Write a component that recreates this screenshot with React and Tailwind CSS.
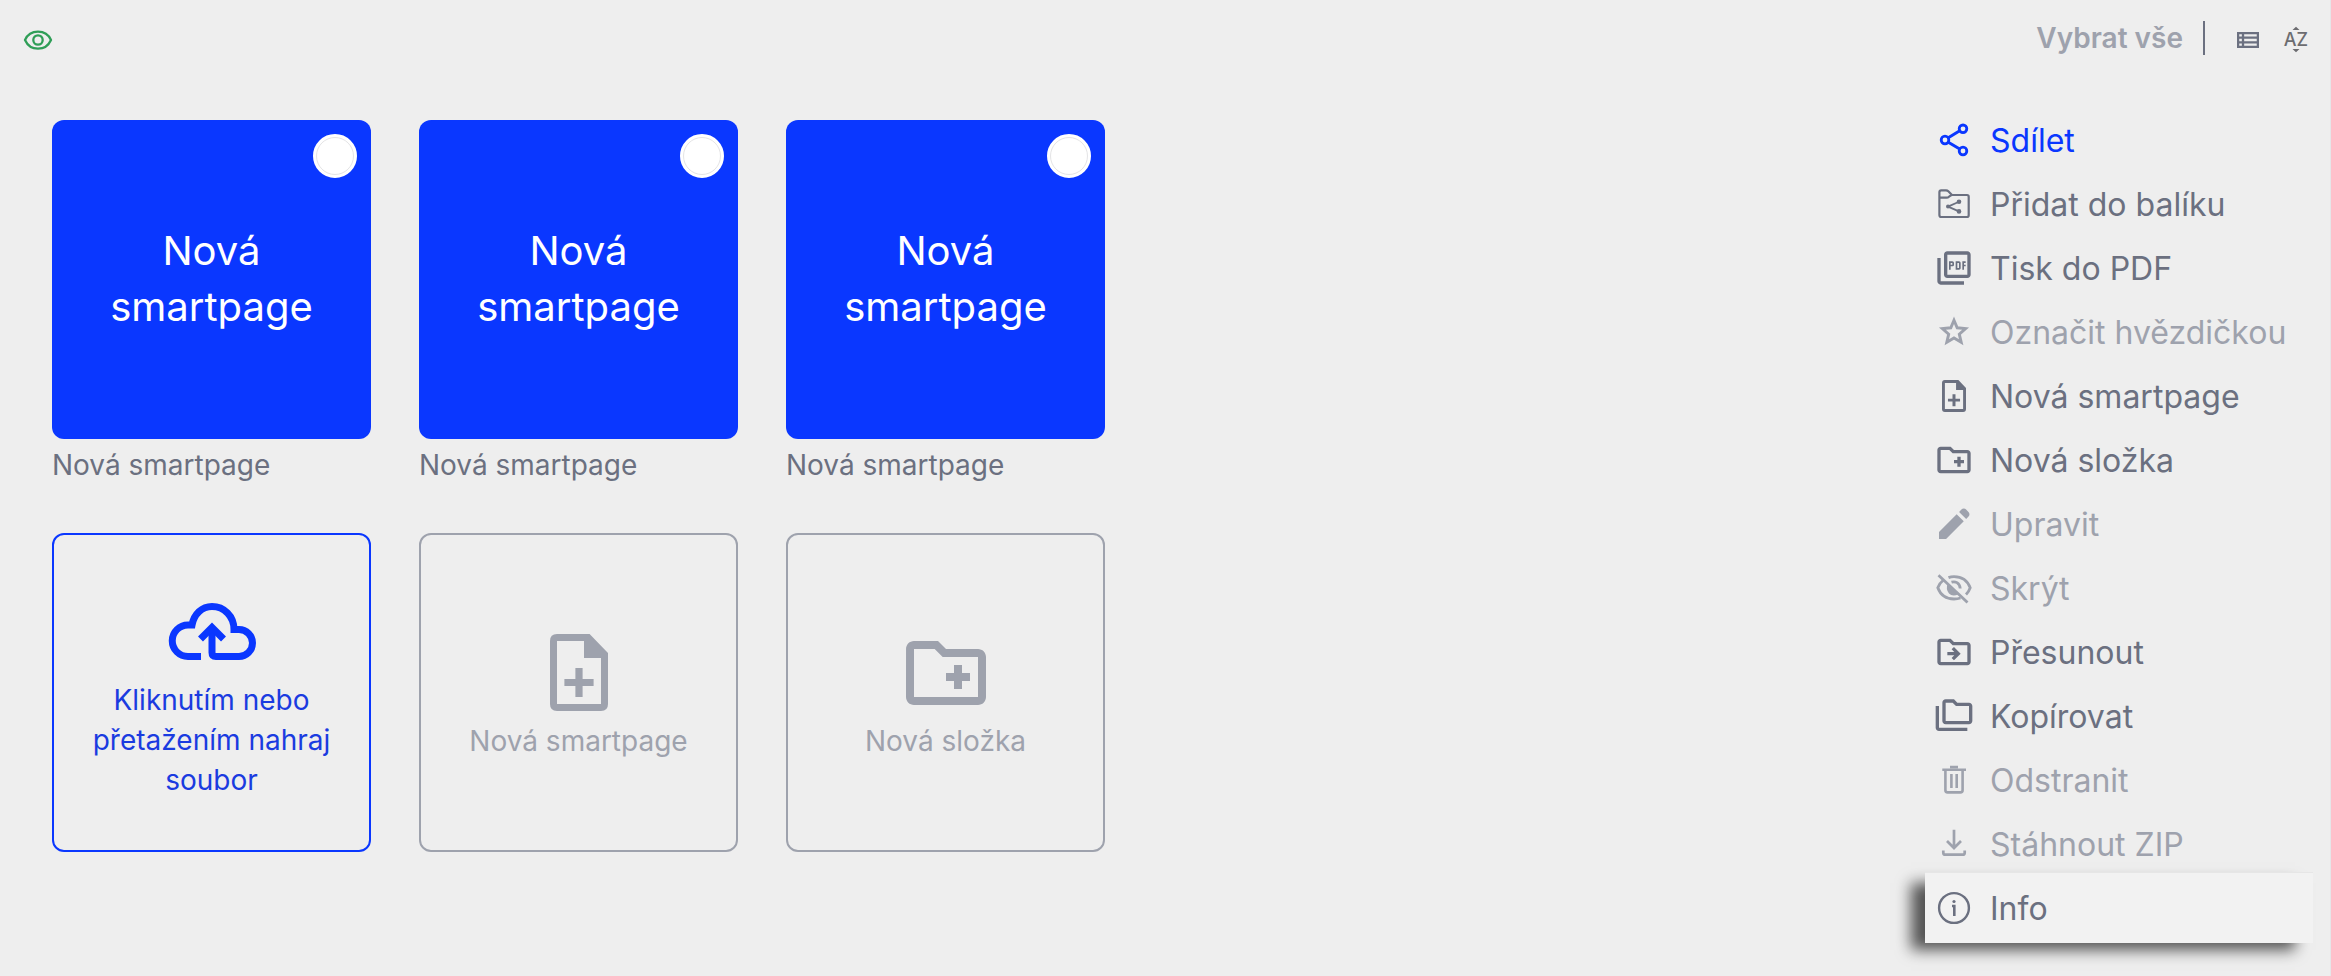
import { MdOutlinePictureAsPdf, MdOutlineCreateNewFolder, MdOutlineDriveFileMove, MdOutlineFolderCopy } from "react-icons/md";

function ShareIcon() {
  return (
    <svg width="40" height="40" viewBox="0 0 40 40" fill="none" stroke="currentColor" strokeWidth="2.8">
      <circle cx="29" cy="8.8" r="3.8" />
      <circle cx="11" cy="20" r="3.8" />
      <circle cx="29" cy="31" r="3.8" />
      <path d="M14.3 17.8 25.7 10.8M14.3 22.2 25.7 29" strokeWidth="3" />
    </svg>
  );
}

function PackageIcon() {
  return (
    <svg width="40" height="40" viewBox="0 0 40 40" fill="none" stroke="currentColor" strokeWidth="2.2" strokeLinejoin="round">
      <path d="M5.4 31V8.2Q5.4 6.4 7.2 6.4H12Q13.4 6.4 14.3 7.3L18 11H33Q34.7 11 34.7 12.7V31.3Q34.7 33 33 33H7.2Q5.4 33 5.4 31Z" />
      <path d="M5.4 13.6H12.6Q14 13.6 15 12.7L17.8 10.8" />
      <path d="M25 17.8 14 22.6 25 27.4" strokeWidth="1.8" />
      <g fill="currentColor" stroke="none">
        <circle cx="25" cy="17.8" r="2.3" />
        <circle cx="14" cy="22.6" r="2" />
        <circle cx="25" cy="27.4" r="2.3" />
      </g>
    </svg>
  );
}

function StarIcon() {
  return (
    <svg width="40" height="40" viewBox="0 0 40 40" fill="none" stroke="currentColor" strokeWidth="2.9">
      <path d="M20 8.2 23.2 15.8 31.6 16.6 25.3 22.2 27.2 30.3 20 26 12.8 30.3 14.7 22.2 8.4 16.6 16.8 15.8Z" />
    </svg>
  );
}

function FileAddIcon({ className }) {
  return (
    <svg className={className} viewBox="0 0 58 77" fill="currentColor">
      <path
        fillRule="evenodd"
        d="M7 0H39.6L58 19V70Q58 77 51 77H7Q0 77 0 70V7Q0 0 7 0ZM7 7V70H51V24H34V7Z"
      />
      <path d="M25.4 34H32.6V45H43.6V52H32.6V63H25.4V52H14.4V45H25.4Z" />
    </svg>
  );
}

function EditIcon() {
  return (
    <svg width="40" height="40" viewBox="0 -960 960 960" fill="currentColor">
      <path d="M772-603 602-771l56-56q23-23 56.5-23t56.5 23l56 56q23 23 24 55.5T829-660l-57 57Zm-58 59L290-120H120v-170l424-424 170 170Z" />
    </svg>
  );
}

function EyeOffIcon() {
  return (
    <svg width="40" height="40" viewBox="0 0 40 40" fill="none" stroke="currentColor" strokeWidth="2.8">
      <path d="M14.5 9.6Q17 8.6 20 8.6C27.5 8.6 33.5 12.5 36.2 19.8Q34.8 23.8 32 26.6" />
      <path d="M9.5 12Q5.5 15 3.8 19.8C6.5 27 12.5 31 20 31Q23.5 31 26.5 30" />
      <path d="M17.5 14.2Q20.5 13.2 23 14.6Q26 16.5 26.2 20.5" />
      <path d="M13.6 15.5 24.5 26.2Q18.5 29 15 25.5 11.5 21.5 13.6 15.5Z" fill="currentColor" stroke="none" />
      <path d="M4.5 7.2 33.5 34.5" />
    </svg>
  );
}

function TrashIcon() {
  return (
    <svg width="40" height="40" viewBox="0 0 40 40" fill="none" stroke="currentColor" strokeWidth="2.6">
      <path d="M8.3 9.7H32M16 7H24" />
      <path d="M11.4 10V30.3Q11.4 32.4 13.5 32.4H26.5Q28.6 32.4 28.6 30.3V10" />
      <path d="M17.4 14V28M22.7 14V28" />
    </svg>
  );
}

function DownloadIcon() {
  return (
    <svg width="40" height="40" viewBox="0 0 40 40" fill="none" stroke="currentColor" strokeWidth="2.7">
      <path d="M20 5.7V24M13 17 20 24 27 17" />
      <path d="M9.3 26.5V28.7Q9.3 30.7 11.3 30.7H28.7Q30.7 30.7 30.7 28.7V26.5" />
    </svg>
  );
}

function InfoIcon() {
  return (
    <svg width="40" height="40" viewBox="0 0 40 40" fill="none" stroke="currentColor" strokeWidth="2.4">
      <circle cx="20" cy="20" r="14.9" />
      <circle cx="20" cy="13.5" r="1.6" fill="currentColor" stroke="none" />
      <path d="M18 18H20.3V28" strokeWidth="2.6" />
    </svg>
  );
}

function EyeIcon() {
  return (
    <svg width="32" height="32" viewBox="0 0 32 32" fill="none" stroke="currentColor" strokeWidth="2.3">
      <path d="M3 16C5.5 10.5 10 7.7 16 7.7S26.5 10.5 29 16C26.5 21.5 22 24.7 16 24.7S5.5 21.5 3 16Z" strokeLinejoin="round" />
      <circle cx="16" cy="16" r="4.7" />
    </svg>
  );
}

function ListIcon() {
  return (
    <svg width="22" height="16" viewBox="0 0 22 16" fill="none" stroke="currentColor" strokeWidth="2.3">
      <path d="M1.1 1.1H20.9V14.9H1.1ZM6 1V15M1 5.6H21M1 10.4H21" />
    </svg>
  );
}

function SortIcon() {
  return (
    <svg width="26" height="28" viewBox="0 0 26 28" fill="#6c6c70">
      <path d="M9.5 4 13 .8 16.500 4ZM9.500 23 13 26.200 16.500 23Z" />
      <text x="13" y="20" textAnchor="middle" fontSize="18" fontWeight="500">AZ</text>
    </svg>
  );
}

const dark = "text-[#6b7080]";
const muted = "text-[#9ea2ad]";

const actions = [
  { label: "Sdílet", icon: <ShareIcon />, tone: "text-[#0a37ff]" },
  { label: "Přidat do balíku", icon: <PackageIcon />, tone: dark },
  { label: "Tisk do PDF", icon: <MdOutlinePictureAsPdf size={40} />, tone: dark },
  { label: "Označit hvězdičkou", icon: <StarIcon />, tone: muted },
  { label: "Nová smartpage", icon: <FileAddIcon className="h-8 w-6" />, tone: dark },
  { label: "Nová složka", icon: <MdOutlineCreateNewFolder size={40} />, tone: dark },
  { label: "Upravit", icon: <EditIcon />, tone: muted },
  { label: "Skrýt", icon: <EyeOffIcon />, tone: muted },
  { label: "Přesunout", icon: <MdOutlineDriveFileMove size={40} />, tone: dark },
  { label: "Kopírovat", icon: <MdOutlineFolderCopy size={40} />, tone: dark },
  { label: "Odstranit", icon: <TrashIcon />, tone: muted },
  { label: "Stáhnout ZIP", icon: <DownloadIcon />, tone: muted },
];

function ActionButton({ label, icon, tone }) {
  return (
    <button type="button" className={`flex h-16 w-full items-center gap-4 pl-[9px] text-left text-[32px] leading-10 whitespace-nowrap ${tone}`}>
      <span className="flex size-10 shrink-0 items-center justify-center">{icon}</span>
      <span className="pt-0.5">{label}</span>
    </button>
  );
}

function PageTile({ id }) {
  return (
    <div className="flex flex-col">
      <div className="relative flex aspect-square items-center justify-center rounded-xl bg-[#0a37ff] px-10 pb-0.5 text-center text-[40px] leading-14 text-white">
        <a href="#smartpage">Nová smartpage</a>
        <input
          id={id}
          type="checkbox"
          className="absolute top-3.5 right-3.5 size-11 appearance-none rounded-full border-2 border-white bg-white outline outline-1 -outline-offset-4 outline-[#e4e4e6]"
        />
      </div>
      <label htmlFor={id} className={`mt-1.5 text-[28px] leading-10 ${dark}`}>Nová smartpage</label>
    </div>
  );
}

export default function App() {
  return (
    <div className="min-h-screen border-r border-[#e6e6e8] bg-[#eeeeee] font-['Inter',sans-serif]">
      <header className="flex h-20 items-center justify-between pr-[21px] pl-[22px]">
        <button type="button" aria-label="Zobrazit" className="text-[#2f9e57]">
          <EyeIcon />
        </button>
        <div className={`flex items-center ${dark}`}>
          <div className="flex items-center pb-1">
            <button type="button" className="text-[28px] leading-10 font-semibold text-[#9ea2ad]">Vybrat vše</button>
            <span className="ml-5 h-[34px] w-0.5 bg-current" />
          </div>
          <button type="button" aria-label="Seznam" className="ml-8"><ListIcon /></button>
          <button type="button" aria-label="Seřadit" className="ml-6"><SortIcon /></button>
        </div>
      </header>
      <div className="flex items-start justify-between pr-[17px] pl-[52px]">
        <main className="grid grid-cols-[repeat(3,319px)] gap-12 pt-10">
          <PageTile id="page-1" />
          <PageTile id="page-2" />
          <PageTile id="page-3" />
          <button type="button" className="flex aspect-square flex-col items-center justify-center rounded-xl border-2 border-[#0a37ff] px-8 pt-4 text-[28px] leading-10 text-[#1a3be0]">
            <svg width="88" height="60" viewBox="0 0 88 60" fill="none" stroke="#0a37ff" strokeWidth="7">
              <path d="M33 54.5H20A15 15 0 0 1 20 23H24C26 12 34 4.5 44 4.5C56 4.5 66 14 66 27.5H71A13.5 13.5 0 0 1 71 54.5H48Q44 54.5 44 50.5V26" />
              <path d="M32.5 37 44 25.5 55.5 37" />
            </svg>
            <span className="mt-[18px]">Kliknutím nebo přetažením nahraj soubor</span>
          </button>
          <button type="button" className={`flex aspect-square flex-col items-center justify-center rounded-xl border-2 border-[#9ea2ad] text-[28px] leading-10 ${muted}`}>
            <span className="flex size-24 items-center justify-center"><FileAddIcon className="h-[77px] w-[58px]" /></span>
            Nová smartpage
          </button>
          <button type="button" className={`flex aspect-square flex-col items-center justify-center rounded-xl border-2 border-[#9ea2ad] text-[28px] leading-10 ${muted}`}>
            <MdOutlineCreateNewFolder size={96} />
            Nová složka
          </button>
        </main>
        <aside className="w-[388px] pt-7">
          <nav className="flex flex-col">
            {actions.map((action) => (
              <ActionButton key={action.label} {...action} />
            ))}
            <div className="-mt-1 border-t border-[#e6e6e6] bg-[#f2f2f2] py-[3px] shadow-[-16px_9px_14px_-2px_rgba(0,0,0,0.65)]">
              <ActionButton label="Info" icon={<InfoIcon />} tone={dark} />
            </div>
          </nav>
        </aside>
      </div>
    </div>
  );
}
